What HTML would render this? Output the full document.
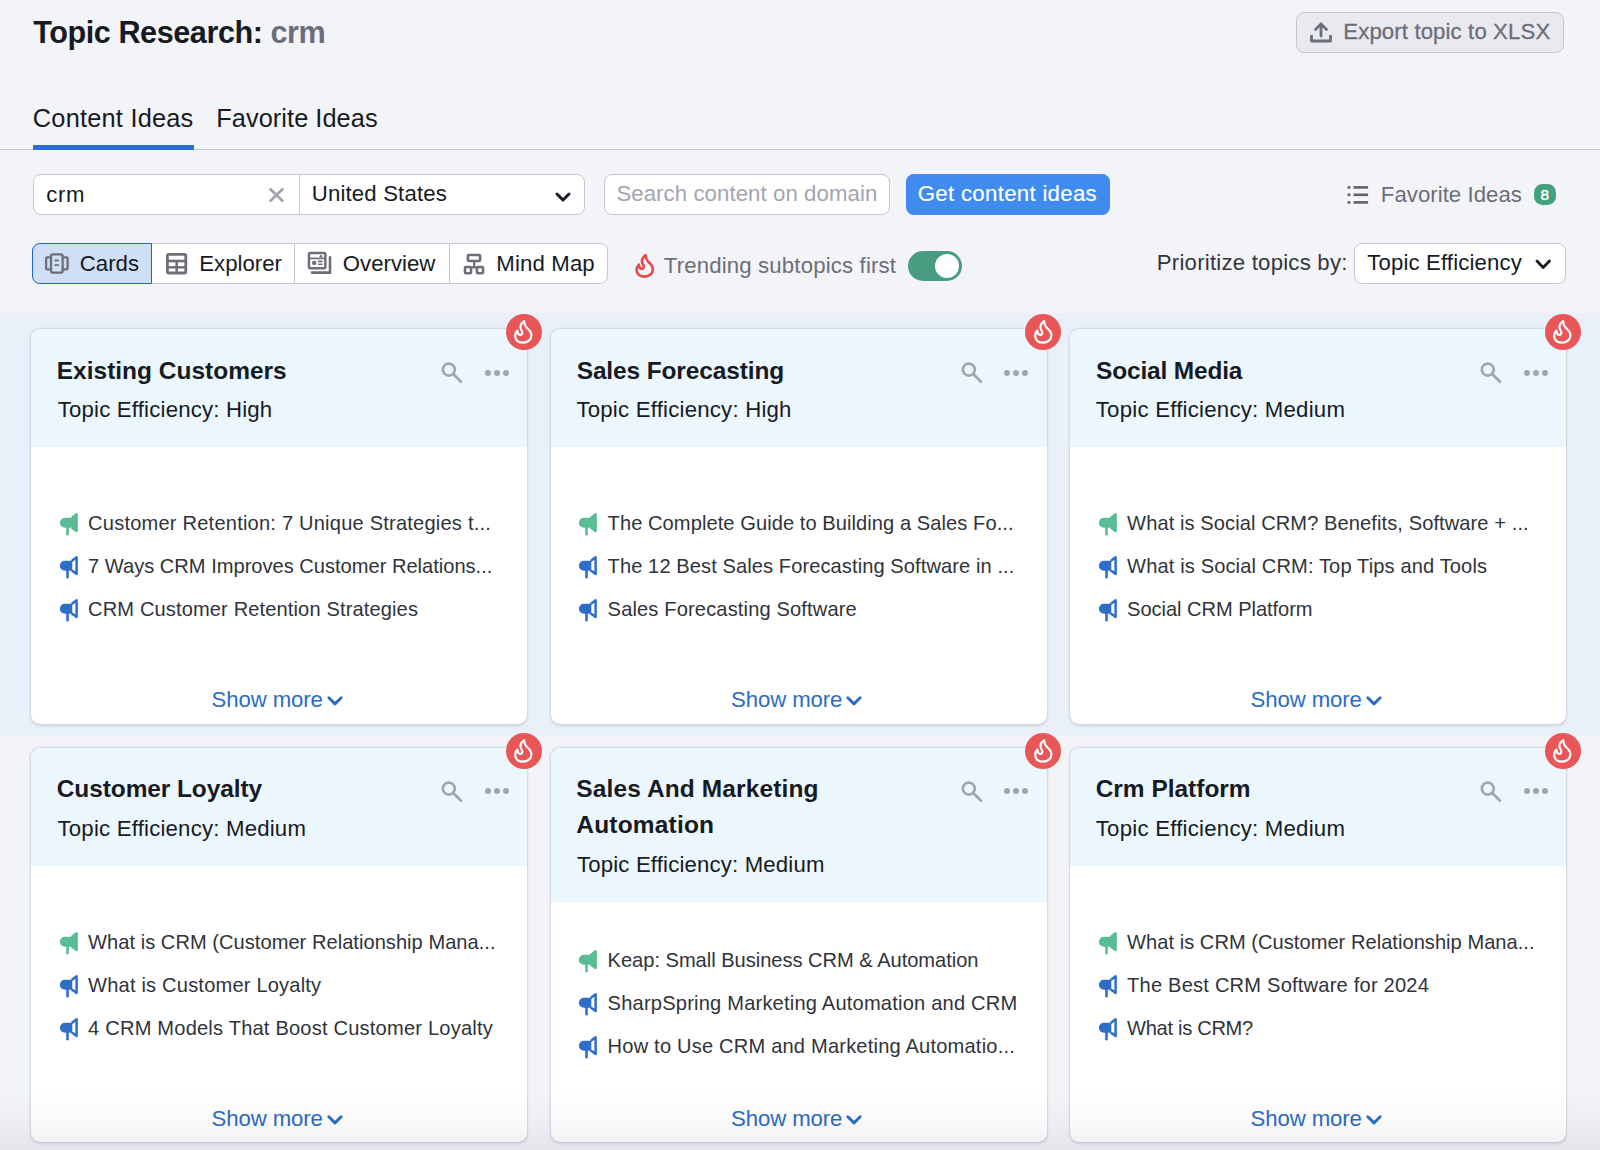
<!DOCTYPE html>
<html><head><meta charset="utf-8">
<style>
*{box-sizing:border-box;margin:0;padding:0}
html,body{width:1600px;height:1150px;overflow:hidden}
body{background:#f3f4f8;font-family:"Liberation Sans", sans-serif;color:#171a22;position:relative}
.a{position:absolute;white-space:nowrap}
.box{border:1.3px solid #c5c7ce;background:#fff;border-radius:8px}
.card{background:#fff;border-radius:9px;overflow:hidden;box-shadow:0 0 0 0.5px rgba(200,206,220,.5),0 0 2px 0.8px rgba(200,206,222,.55),0 1.5px 3px rgba(60,70,90,.12)}
svg.a{overflow:visible}
</style></head><body>
<div class="a" style="left:33.30px;top:17.10px;font-size:30.6px;line-height:30.6px;color:#171a22;font-weight:bold;letter-spacing:-0.439px;">Topic Research: <span style="color:#6b6e7a">crm</span></div>
<div class="a" style="left:1295.5px;top:11.5px;width:268px;height:41px;border:1.3px solid #c5c7ce;border-radius:8px;background:#e9eaef"></div>
<svg class="a" style="left:1309px;top:21px" width="24" height="23" viewBox="0 0 24 23"><path d="M12 3 V15 M6.5 8.5 L12 3 L17.5 8.5" stroke="#6c6e79" stroke-width="2.8" fill="none" stroke-linecap="round" stroke-linejoin="round"/><path d="M2.5 14 V20 H21.5 V14" stroke="#6c6e79" stroke-width="2.8" fill="none" stroke-linejoin="round"/></svg>
<div class="a" style="left:1343.30px;top:20.61px;font-size:22.2px;line-height:22.2px;color:#6c6e79;font-weight:normal;letter-spacing:0.114px;-webkit-text-stroke:0.3px #6c6e79">Export topic to XLSX</div>
<div class="a" style="left:32.80px;top:106.02px;font-size:25.37px;line-height:25.37px;color:#171a22;font-weight:normal;letter-spacing:0.215px;">Content Ideas</div>
<div class="a" style="left:216.30px;top:106.02px;font-size:25.37px;line-height:25.37px;color:#171a22;font-weight:normal;letter-spacing:0.047px;">Favorite Ideas</div>
<div class="a" style="left:0;top:148.5px;width:1600px;height:1.5px;background:#c4c6cd"></div>
<div class="a" style="left:33px;top:145.3px;width:160.5px;height:4.5px;background:#2a6fcf"></div>
<div class="a box" style="left:33.4px;top:174.2px;width:552px;height:41.3px"></div>
<div class="a" style="left:299px;top:175px;width:1.3px;height:40px;background:#c7c9d1"></div>
<div class="a" style="left:46.20px;top:183.51px;font-size:22.2px;line-height:22.2px;color:#171a22;font-weight:normal;letter-spacing:0.700px;">crm</div>
<svg class="a" style="left:260px;top:180px" width="30" height="30" viewBox="0 0 30 30"><path d="M10.5 9.2 L22.4 20.8 M22.4 9.2 L10.5 20.8" stroke="#a0a3ad" stroke-width="2.7" stroke-linecap="round"/></svg>
<div class="a" style="left:311.80px;top:183.41px;font-size:22.2px;line-height:22.2px;color:#171a22;font-weight:normal;letter-spacing:0.152px;">United States</div>
<svg class="a" style="left:555.2px;top:191.6px" width="16" height="11" viewBox="0 0 16 11"><path d="M2 2 L8 8 L14 2" stroke="#171a22" stroke-width="3" fill="none" stroke-linecap="round" stroke-linejoin="round"/></svg>
<div class="a box" style="left:604px;top:174.2px;width:286px;height:41.3px"></div>
<div class="a" style="left:616.40px;top:183.41px;font-size:22.2px;line-height:22.2px;color:#a3a5ae;font-weight:normal;letter-spacing:0.082px;">Search content on domain</div>
<div class="a" style="left:905.7px;top:174.2px;width:204px;height:41.3px;background:#3f8bef;border-radius:8px"></div>
<div class="a" style="left:917.80px;top:183.41px;font-size:22.2px;line-height:22.2px;color:#fff;font-weight:normal;letter-spacing:0.309px;-webkit-text-stroke:0.15px #fff">Get content ideas</div>
<svg class="a" style="left:1347px;top:185px" width="23" height="20" viewBox="0 0 23 20"><g fill="#5f616c"><rect x="0.6" y="1.1" width="2.8" height="2.6"/><rect x="0.6" y="8.5" width="2.8" height="2.6"/><rect x="0.6" y="16.1" width="2.8" height="2.6"/><rect x="6.6" y="1.1" width="14.5" height="2.6"/><rect x="6.6" y="8.5" width="14.5" height="2.6"/><rect x="6.6" y="16.1" width="14.5" height="2.6"/></g></svg>
<div class="a" style="left:1380.80px;top:183.51px;font-size:22.2px;line-height:22.2px;color:#6c6e79;font-weight:normal;letter-spacing:0.037px;">Favorite Ideas</div>
<div class="a" style="left:1534px;top:184.3px;width:21.7px;height:20.7px;background:#45a07d;border-radius:8.5px"></div>
<div class="a" style="left:1540.60px;top:187.18px;font-size:15.5px;line-height:15.5px;color:#fff;font-weight:normal;letter-spacing:0.000px;-webkit-text-stroke:0.4px #fff">8</div>
<div class="a" style="left:31.7px;top:243px;width:576.5px;height:41px;border:1.3px solid #c5c7ce;border-radius:8px;background:#fff"></div>
<div class="a" style="left:31.7px;top:243px;width:120.5px;height:41px;border:1.5px solid #1f63cc;border-radius:8px 0 0 8px;background:#cfe0f6"></div>
<div class="a" style="left:294px;top:244px;width:1.3px;height:39px;background:#c7c9d1"></div>
<div class="a" style="left:449px;top:244px;width:1.3px;height:39px;background:#c7c9d1"></div>
<svg class="a" style="left:40px;top:248px" width="30" height="30" viewBox="0 0 30 30"><rect x="11" y="6.3" width="11.6" height="18.3" rx="1.6" fill="none" stroke="#6c6e79" stroke-width="2.3"/><path d="M11 9.4 H7.2 Q6.1 9.4 6.1 10.5 V20.2 Q6.1 21.3 7.2 21.3 H11 M22.6 9.4 H26.5 Q27.6 9.4 27.6 10.5 V20.2 Q27.6 21.3 26.5 21.3 H22.6" fill="none" stroke="#6c6e79" stroke-width="2.3"/><path d="M15.3 12.4 H18.3 M15.3 17.1 H18.3" stroke="#6c6e79" stroke-width="1.9" stroke-linecap="round"/></svg>
<div class="a" style="left:79.80px;top:252.61px;font-size:22.2px;line-height:22.2px;color:#171a22;font-weight:normal;letter-spacing:0.000px;">Cards</div>
<svg class="a" style="left:165.5px;top:252.5px" width="22" height="22" viewBox="0 0 22 22"><rect x="1.4" y="1.4" width="18.4" height="18.6" rx="1.5" fill="none" stroke="#6c6e79" stroke-width="2.8"/><rect x="1" y="6.7" width="19" height="2.6" fill="#6c6e79"/><rect x="1" y="13.1" width="19" height="2.4" fill="#6c6e79"/><rect x="9.4" y="8" width="2.5" height="12" fill="#6c6e79"/></svg>
<div class="a" style="left:199.30px;top:252.61px;font-size:22.2px;line-height:22.2px;color:#171a22;font-weight:normal;letter-spacing:0.002px;">Explorer</div>
<svg class="a" style="left:306.5px;top:251px" width="26" height="24" viewBox="0 0 26 24"><rect x="1.95" y="2.05" width="16.4" height="15.1" rx="1.3" fill="none" stroke="#6c6e79" stroke-width="2.5"/><path d="M1.5 7.4 H18.5" stroke="#6c6e79" stroke-width="1.7"/><circle cx="14" cy="5.2" r="1.3" fill="#6c6e79"/><circle cx="7.2" cy="11.9" r="2.2" fill="#6c6e79"/><path d="M11.6 10.4 H14.9 M11.6 13.3 H14.9" stroke="#6c6e79" stroke-width="1.6" stroke-linecap="round"/><path d="M23 6.4 V21.6 H5" fill="none" stroke="#6c6e79" stroke-width="2.6" stroke-linecap="round"/></svg>
<div class="a" style="left:342.80px;top:252.61px;font-size:22.2px;line-height:22.2px;color:#171a22;font-weight:normal;letter-spacing:0.002px;">Overview</div>
<svg class="a" style="left:462.5px;top:252.5px" width="22" height="22" viewBox="0 0 22 22"><rect x="4.9" y="2" width="12.2" height="6" rx="1" fill="none" stroke="#6c6e79" stroke-width="2.6"/><rect x="2" y="14" width="6" height="6.2" rx="1" fill="none" stroke="#6c6e79" stroke-width="2.6"/><rect x="14" y="14" width="6" height="6.2" rx="1" fill="none" stroke="#6c6e79" stroke-width="2.6"/><path d="M11.1 8 V14 M7 14.3 H15" fill="none" stroke="#6c6e79" stroke-width="2.2"/></svg>
<div class="a" style="left:496.30px;top:252.61px;font-size:22.2px;line-height:22.2px;color:#171a22;font-weight:normal;letter-spacing:0.142px;">Mind Map</div>
<svg class="a" style="left:635px;top:253.8px" width="20" height="24" viewBox="0 0 19 24"><path d="M10.2 1.2 C6.6 3.6 5.2 7.4 7.6 10.6 C8.8 12.2 8.6 14.6 6.6 14.9 C4.8 15.2 3.6 13.2 3.4 10.6 C1.4 12.6 0.9 15.2 1.3 17.2 C2 20.6 5.2 22.6 9.1 22.6 C13.6 22.6 17.4 19.6 17.4 15.2 C17.4 11.6 14.6 9.6 12.6 7.6 C11.2 6.2 10.4 4.8 10.2 1.2 Z" fill="none" stroke="#e8484a" stroke-width="2.6" stroke-linejoin="round"/></svg>
<div class="a" style="left:663.80px;top:254.81px;font-size:22.2px;line-height:22.2px;color:#6c6e79;font-weight:normal;letter-spacing:0.157px;">Trending subtopics first</div>
<div class="a" style="left:908.3px;top:250.9px;width:53.7px;height:29.8px;border-radius:15px;background:#4a9c80"></div>
<div class="a" style="left:935px;top:253.9px;width:24px;height:24px;border-radius:50%;background:#fff"></div>
<div class="a" style="left:1156.80px;top:251.71px;font-size:22.2px;line-height:22.2px;color:#33363d;font-weight:normal;letter-spacing:0.220px;">Prioritize topics by:</div>
<div class="a box" style="left:1353.5px;top:243.4px;width:212px;height:40.5px"></div>
<div class="a" style="left:1367.30px;top:251.71px;font-size:22.2px;line-height:22.2px;color:#171a22;font-weight:normal;letter-spacing:0.130px;">Topic Efficiency</div>
<svg class="a" style="left:1535px;top:259px" width="17" height="12" viewBox="0 0 17 12"><path d="M2 2 L8.2 8.5 L14.5 2" stroke="#171a22" stroke-width="2.8" fill="none" stroke-linecap="round" stroke-linejoin="round"/></svg>
<div class="a" style="left:0;top:313px;width:1600px;height:423px;background:#e9f0f9"></div>
<div class="a card" style="left:31px;top:329px;width:496px;height:394.6px"><div style="position:absolute;left:0;top:0;width:100%;height:118px;background:#ecf6fd"></div></div>
<div class="a" style="left:56.80px;top:358.78px;font-size:24.48px;line-height:24.48px;color:#171a22;font-weight:bold;letter-spacing:0.003px;">Existing Customers</div>
<div class="a" style="left:57.70px;top:399.01px;font-size:22.2px;line-height:22.2px;color:#171a22;font-weight:normal;letter-spacing:0.192px;">Topic Efficiency: High</div>
<svg class="a" style="left:439px;top:360px" width="26" height="26" viewBox="0 0 26 26"><circle cx="9.8" cy="9.6" r="6" fill="none" stroke="#a3a5ae" stroke-width="2.7"/><path d="M14.2 14 L22 21.8" stroke="#a3a5ae" stroke-width="2.7" stroke-linecap="round"/></svg>
<div class="a" style="left:484.5px;top:369.59999999999997px;width:6.2px;height:6.2px;border-radius:50%;background:#a3a5ae"></div>
<div class="a" style="left:493.7px;top:369.59999999999997px;width:6.2px;height:6.2px;border-radius:50%;background:#a3a5ae"></div>
<div class="a" style="left:502.5px;top:369.59999999999997px;width:6.2px;height:6.2px;border-radius:50%;background:#a3a5ae"></div>
<svg class="a" style="left:59.7px;top:513.1px" width="19" height="23" viewBox="0 0 19 23"><path d="M4.9 4.7 H12.3 V14.8 H4.9 A5.05 5.05 0 0 1 4.9 4.7 Z" fill="#58bd92"/><path d="M11.7 4.9 L16.6 1.3 V17.9 L11.7 14.5" fill="#58bd92" stroke="#58bd92" stroke-width="2.5" stroke-linejoin="round"/><path d="M7.5 13 V21.2" stroke="#58bd92" stroke-width="2.6" stroke-linecap="round"/></svg>
<div class="a" style="left:88.10px;top:513.00px;font-size:20.08px;line-height:20.08px;color:#30333a;font-weight:normal;letter-spacing:0.204px;">Customer Retention: 7 Unique Strategies t...</div>
<svg class="a" style="left:59.7px;top:556.1px" width="19" height="23" viewBox="0 0 19 23"><path d="M4.9 4.7 H12.3 V14.8 H4.9 A5.05 5.05 0 0 1 4.9 4.7 Z" fill="#2e6ec8"/><path d="M11.7 4.9 L16.6 1.3 V17.9 L11.7 14.5" fill="none" stroke="#2e6ec8" stroke-width="2.5" stroke-linejoin="round"/><path d="M7.5 13 V21.2" stroke="#2e6ec8" stroke-width="2.6" stroke-linecap="round"/></svg>
<div class="a" style="left:88.10px;top:556.00px;font-size:20.08px;line-height:20.08px;color:#30333a;font-weight:normal;letter-spacing:-0.001px;">7 Ways CRM Improves Customer Relations...</div>
<svg class="a" style="left:59.7px;top:599.1px" width="19" height="23" viewBox="0 0 19 23"><path d="M4.9 4.7 H12.3 V14.8 H4.9 A5.05 5.05 0 0 1 4.9 4.7 Z" fill="#2e6ec8"/><path d="M11.7 4.9 L16.6 1.3 V17.9 L11.7 14.5" fill="none" stroke="#2e6ec8" stroke-width="2.5" stroke-linejoin="round"/><path d="M7.5 13 V21.2" stroke="#2e6ec8" stroke-width="2.6" stroke-linecap="round"/></svg>
<div class="a" style="left:88.10px;top:599.00px;font-size:20.08px;line-height:20.08px;color:#30333a;font-weight:normal;letter-spacing:0.125px;">CRM Customer Retention Strategies</div>
<div class="a" style="left:211.60px;top:689.41px;font-size:22.2px;line-height:22.2px;color:#2c6cc0;font-weight:normal;letter-spacing:-0.112px;">Show more</div>
<svg class="a" style="left:326.5px;top:696px" width="16" height="11" viewBox="0 0 16 11"><path d="M1.8 1.8 L8 7.9 L14.2 1.8" stroke="#2c6cc0" stroke-width="2.9" fill="none" stroke-linecap="round" stroke-linejoin="round"/></svg>
<div class="a" style="left:505.5px;top:314.3px;width:36px;height:36px;border-radius:50%;background:#e95658"></div>
<svg class="a" style="left:514.1px;top:320.40000000000003px" width="19" height="24" viewBox="0 0 19 24"><path d="M10.2 1.2 C6.6 3.6 5.2 7.4 7.6 10.6 C8.8 12.2 8.6 14.6 6.6 14.9 C4.8 15.2 3.6 13.2 3.4 10.6 C1.4 12.6 0.9 15.2 1.3 17.2 C2 20.6 5.2 22.6 9.1 22.6 C13.6 22.6 17.4 19.6 17.4 15.2 C17.4 11.6 14.6 9.6 12.6 7.6 C11.2 6.2 10.4 4.8 10.2 1.2 Z" fill="none" stroke="#fff" stroke-width="2.2" stroke-linejoin="round"/></svg>
<div class="a card" style="left:550.5px;top:329px;width:496px;height:394.6px"><div style="position:absolute;left:0;top:0;width:100%;height:118px;background:#ecf6fd"></div></div>
<div class="a" style="left:576.70px;top:358.78px;font-size:24.48px;line-height:24.48px;color:#171a22;font-weight:bold;letter-spacing:-0.121px;">Sales Forecasting</div>
<div class="a" style="left:576.40px;top:399.01px;font-size:22.2px;line-height:22.2px;color:#171a22;font-weight:normal;letter-spacing:0.219px;">Topic Efficiency: High</div>
<svg class="a" style="left:958.5px;top:360px" width="26" height="26" viewBox="0 0 26 26"><circle cx="9.8" cy="9.6" r="6" fill="none" stroke="#a3a5ae" stroke-width="2.7"/><path d="M14.2 14 L22 21.8" stroke="#a3a5ae" stroke-width="2.7" stroke-linecap="round"/></svg>
<div class="a" style="left:1004.0px;top:369.59999999999997px;width:6.2px;height:6.2px;border-radius:50%;background:#a3a5ae"></div>
<div class="a" style="left:1013.1999999999999px;top:369.59999999999997px;width:6.2px;height:6.2px;border-radius:50%;background:#a3a5ae"></div>
<div class="a" style="left:1021.9999999999999px;top:369.59999999999997px;width:6.2px;height:6.2px;border-radius:50%;background:#a3a5ae"></div>
<svg class="a" style="left:579.2px;top:513.1px" width="19" height="23" viewBox="0 0 19 23"><path d="M4.9 4.7 H12.3 V14.8 H4.9 A5.05 5.05 0 0 1 4.9 4.7 Z" fill="#58bd92"/><path d="M11.7 4.9 L16.6 1.3 V17.9 L11.7 14.5" fill="#58bd92" stroke="#58bd92" stroke-width="2.5" stroke-linejoin="round"/><path d="M7.5 13 V21.2" stroke="#58bd92" stroke-width="2.6" stroke-linecap="round"/></svg>
<div class="a" style="left:607.60px;top:513.00px;font-size:20.08px;line-height:20.08px;color:#30333a;font-weight:normal;letter-spacing:0.071px;">The Complete Guide to Building a Sales Fo...</div>
<svg class="a" style="left:579.2px;top:556.1px" width="19" height="23" viewBox="0 0 19 23"><path d="M4.9 4.7 H12.3 V14.8 H4.9 A5.05 5.05 0 0 1 4.9 4.7 Z" fill="#2e6ec8"/><path d="M11.7 4.9 L16.6 1.3 V17.9 L11.7 14.5" fill="none" stroke="#2e6ec8" stroke-width="2.5" stroke-linejoin="round"/><path d="M7.5 13 V21.2" stroke="#2e6ec8" stroke-width="2.6" stroke-linecap="round"/></svg>
<div class="a" style="left:607.60px;top:556.00px;font-size:20.08px;line-height:20.08px;color:#30333a;font-weight:normal;letter-spacing:0.088px;">The 12 Best Sales Forecasting Software in ...</div>
<svg class="a" style="left:579.2px;top:599.1px" width="19" height="23" viewBox="0 0 19 23"><path d="M4.9 4.7 H12.3 V14.8 H4.9 A5.05 5.05 0 0 1 4.9 4.7 Z" fill="#2e6ec8"/><path d="M11.7 4.9 L16.6 1.3 V17.9 L11.7 14.5" fill="none" stroke="#2e6ec8" stroke-width="2.5" stroke-linejoin="round"/><path d="M7.5 13 V21.2" stroke="#2e6ec8" stroke-width="2.6" stroke-linecap="round"/></svg>
<div class="a" style="left:607.60px;top:599.00px;font-size:20.08px;line-height:20.08px;color:#30333a;font-weight:normal;letter-spacing:0.146px;">Sales Forecasting Software</div>
<div class="a" style="left:731.10px;top:689.41px;font-size:22.2px;line-height:22.2px;color:#2c6cc0;font-weight:normal;letter-spacing:-0.112px;">Show more</div>
<svg class="a" style="left:846.0px;top:696px" width="16" height="11" viewBox="0 0 16 11"><path d="M1.8 1.8 L8 7.9 L14.2 1.8" stroke="#2c6cc0" stroke-width="2.9" fill="none" stroke-linecap="round" stroke-linejoin="round"/></svg>
<div class="a" style="left:1025.0px;top:314.3px;width:36px;height:36px;border-radius:50%;background:#e95658"></div>
<svg class="a" style="left:1033.6px;top:320.40000000000003px" width="19" height="24" viewBox="0 0 19 24"><path d="M10.2 1.2 C6.6 3.6 5.2 7.4 7.6 10.6 C8.8 12.2 8.6 14.6 6.6 14.9 C4.8 15.2 3.6 13.2 3.4 10.6 C1.4 12.6 0.9 15.2 1.3 17.2 C2 20.6 5.2 22.6 9.1 22.6 C13.6 22.6 17.4 19.6 17.4 15.2 C17.4 11.6 14.6 9.6 12.6 7.6 C11.2 6.2 10.4 4.8 10.2 1.2 Z" fill="none" stroke="#fff" stroke-width="2.2" stroke-linejoin="round"/></svg>
<div class="a card" style="left:1070px;top:329px;width:496px;height:394.6px"><div style="position:absolute;left:0;top:0;width:100%;height:118px;background:#ecf6fd"></div></div>
<div class="a" style="left:1096.10px;top:358.78px;font-size:24.48px;line-height:24.48px;color:#171a22;font-weight:bold;letter-spacing:-0.170px;">Social Media</div>
<div class="a" style="left:1095.80px;top:399.01px;font-size:22.2px;line-height:22.2px;color:#171a22;font-weight:normal;letter-spacing:0.233px;">Topic Efficiency: Medium</div>
<svg class="a" style="left:1478px;top:360px" width="26" height="26" viewBox="0 0 26 26"><circle cx="9.8" cy="9.6" r="6" fill="none" stroke="#a3a5ae" stroke-width="2.7"/><path d="M14.2 14 L22 21.8" stroke="#a3a5ae" stroke-width="2.7" stroke-linecap="round"/></svg>
<div class="a" style="left:1523.5px;top:369.59999999999997px;width:6.2px;height:6.2px;border-radius:50%;background:#a3a5ae"></div>
<div class="a" style="left:1532.7px;top:369.59999999999997px;width:6.2px;height:6.2px;border-radius:50%;background:#a3a5ae"></div>
<div class="a" style="left:1541.5px;top:369.59999999999997px;width:6.2px;height:6.2px;border-radius:50%;background:#a3a5ae"></div>
<svg class="a" style="left:1098.7px;top:513.1px" width="19" height="23" viewBox="0 0 19 23"><path d="M4.9 4.7 H12.3 V14.8 H4.9 A5.05 5.05 0 0 1 4.9 4.7 Z" fill="#58bd92"/><path d="M11.7 4.9 L16.6 1.3 V17.9 L11.7 14.5" fill="#58bd92" stroke="#58bd92" stroke-width="2.5" stroke-linejoin="round"/><path d="M7.5 13 V21.2" stroke="#58bd92" stroke-width="2.6" stroke-linecap="round"/></svg>
<div class="a" style="left:1127.10px;top:513.00px;font-size:20.08px;line-height:20.08px;color:#30333a;font-weight:normal;letter-spacing:0.088px;">What is Social CRM? Benefits, Software + ...</div>
<svg class="a" style="left:1098.7px;top:556.1px" width="19" height="23" viewBox="0 0 19 23"><path d="M4.9 4.7 H12.3 V14.8 H4.9 A5.05 5.05 0 0 1 4.9 4.7 Z" fill="#2e6ec8"/><path d="M11.7 4.9 L16.6 1.3 V17.9 L11.7 14.5" fill="none" stroke="#2e6ec8" stroke-width="2.5" stroke-linejoin="round"/><path d="M7.5 13 V21.2" stroke="#2e6ec8" stroke-width="2.6" stroke-linecap="round"/></svg>
<div class="a" style="left:1127.10px;top:556.00px;font-size:20.08px;line-height:20.08px;color:#30333a;font-weight:normal;letter-spacing:0.127px;">What is Social CRM: Top Tips and Tools</div>
<svg class="a" style="left:1098.7px;top:599.1px" width="19" height="23" viewBox="0 0 19 23"><path d="M4.9 4.7 H12.3 V14.8 H4.9 A5.05 5.05 0 0 1 4.9 4.7 Z" fill="#2e6ec8"/><path d="M11.7 4.9 L16.6 1.3 V17.9 L11.7 14.5" fill="none" stroke="#2e6ec8" stroke-width="2.5" stroke-linejoin="round"/><path d="M7.5 13 V21.2" stroke="#2e6ec8" stroke-width="2.6" stroke-linecap="round"/></svg>
<div class="a" style="left:1127.10px;top:599.00px;font-size:20.08px;line-height:20.08px;color:#30333a;font-weight:normal;letter-spacing:-0.047px;">Social CRM Platform</div>
<div class="a" style="left:1250.60px;top:689.41px;font-size:22.2px;line-height:22.2px;color:#2c6cc0;font-weight:normal;letter-spacing:-0.112px;">Show more</div>
<svg class="a" style="left:1365.5px;top:696px" width="16" height="11" viewBox="0 0 16 11"><path d="M1.8 1.8 L8 7.9 L14.2 1.8" stroke="#2c6cc0" stroke-width="2.9" fill="none" stroke-linecap="round" stroke-linejoin="round"/></svg>
<div class="a" style="left:1544.5px;top:314.3px;width:36px;height:36px;border-radius:50%;background:#e95658"></div>
<svg class="a" style="left:1553.1px;top:320.40000000000003px" width="19" height="24" viewBox="0 0 19 24"><path d="M10.2 1.2 C6.6 3.6 5.2 7.4 7.6 10.6 C8.8 12.2 8.6 14.6 6.6 14.9 C4.8 15.2 3.6 13.2 3.4 10.6 C1.4 12.6 0.9 15.2 1.3 17.2 C2 20.6 5.2 22.6 9.1 22.6 C13.6 22.6 17.4 19.6 17.4 15.2 C17.4 11.6 14.6 9.6 12.6 7.6 C11.2 6.2 10.4 4.8 10.2 1.2 Z" fill="none" stroke="#fff" stroke-width="2.2" stroke-linejoin="round"/></svg>
<div class="a card" style="left:31px;top:747.7px;width:496px;height:394.6px"><div style="position:absolute;left:0;top:0;width:100%;height:118px;background:#ecf6fd"></div></div>
<div class="a" style="left:56.80px;top:777.48px;font-size:24.48px;line-height:24.48px;color:#171a22;font-weight:bold;letter-spacing:-0.093px;">Customer Loyalty</div>
<div class="a" style="left:57.50px;top:817.71px;font-size:22.2px;line-height:22.2px;color:#171a22;font-weight:normal;letter-spacing:0.202px;">Topic Efficiency: Medium</div>
<svg class="a" style="left:439px;top:778.7px" width="26" height="26" viewBox="0 0 26 26"><circle cx="9.8" cy="9.6" r="6" fill="none" stroke="#a3a5ae" stroke-width="2.7"/><path d="M14.2 14 L22 21.8" stroke="#a3a5ae" stroke-width="2.7" stroke-linecap="round"/></svg>
<div class="a" style="left:484.5px;top:788.3000000000001px;width:6.2px;height:6.2px;border-radius:50%;background:#a3a5ae"></div>
<div class="a" style="left:493.7px;top:788.3000000000001px;width:6.2px;height:6.2px;border-radius:50%;background:#a3a5ae"></div>
<div class="a" style="left:502.5px;top:788.3000000000001px;width:6.2px;height:6.2px;border-radius:50%;background:#a3a5ae"></div>
<svg class="a" style="left:59.7px;top:931.8000000000001px" width="19" height="23" viewBox="0 0 19 23"><path d="M4.9 4.7 H12.3 V14.8 H4.9 A5.05 5.05 0 0 1 4.9 4.7 Z" fill="#58bd92"/><path d="M11.7 4.9 L16.6 1.3 V17.9 L11.7 14.5" fill="#58bd92" stroke="#58bd92" stroke-width="2.5" stroke-linejoin="round"/><path d="M7.5 13 V21.2" stroke="#58bd92" stroke-width="2.6" stroke-linecap="round"/></svg>
<div class="a" style="left:88.10px;top:931.70px;font-size:20.08px;line-height:20.08px;color:#30333a;font-weight:normal;letter-spacing:0.032px;">What is CRM (Customer Relationship Mana...</div>
<svg class="a" style="left:59.7px;top:974.8000000000001px" width="19" height="23" viewBox="0 0 19 23"><path d="M4.9 4.7 H12.3 V14.8 H4.9 A5.05 5.05 0 0 1 4.9 4.7 Z" fill="#2e6ec8"/><path d="M11.7 4.9 L16.6 1.3 V17.9 L11.7 14.5" fill="none" stroke="#2e6ec8" stroke-width="2.5" stroke-linejoin="round"/><path d="M7.5 13 V21.2" stroke="#2e6ec8" stroke-width="2.6" stroke-linecap="round"/></svg>
<div class="a" style="left:88.10px;top:974.70px;font-size:20.08px;line-height:20.08px;color:#30333a;font-weight:normal;letter-spacing:0.187px;">What is Customer Loyalty</div>
<svg class="a" style="left:59.7px;top:1017.8000000000001px" width="19" height="23" viewBox="0 0 19 23"><path d="M4.9 4.7 H12.3 V14.8 H4.9 A5.05 5.05 0 0 1 4.9 4.7 Z" fill="#2e6ec8"/><path d="M11.7 4.9 L16.6 1.3 V17.9 L11.7 14.5" fill="none" stroke="#2e6ec8" stroke-width="2.5" stroke-linejoin="round"/><path d="M7.5 13 V21.2" stroke="#2e6ec8" stroke-width="2.6" stroke-linecap="round"/></svg>
<div class="a" style="left:88.10px;top:1017.70px;font-size:20.08px;line-height:20.08px;color:#30333a;font-weight:normal;letter-spacing:0.199px;">4 CRM Models That Boost Customer Loyalty</div>
<div class="a" style="left:211.60px;top:1108.11px;font-size:22.2px;line-height:22.2px;color:#2c6cc0;font-weight:normal;letter-spacing:-0.112px;">Show more</div>
<svg class="a" style="left:326.5px;top:1114.7px" width="16" height="11" viewBox="0 0 16 11"><path d="M1.8 1.8 L8 7.9 L14.2 1.8" stroke="#2c6cc0" stroke-width="2.9" fill="none" stroke-linecap="round" stroke-linejoin="round"/></svg>
<div class="a" style="left:505.5px;top:733.0px;width:36px;height:36px;border-radius:50%;background:#e95658"></div>
<svg class="a" style="left:514.1px;top:739.1px" width="19" height="24" viewBox="0 0 19 24"><path d="M10.2 1.2 C6.6 3.6 5.2 7.4 7.6 10.6 C8.8 12.2 8.6 14.6 6.6 14.9 C4.8 15.2 3.6 13.2 3.4 10.6 C1.4 12.6 0.9 15.2 1.3 17.2 C2 20.6 5.2 22.6 9.1 22.6 C13.6 22.6 17.4 19.6 17.4 15.2 C17.4 11.6 14.6 9.6 12.6 7.6 C11.2 6.2 10.4 4.8 10.2 1.2 Z" fill="none" stroke="#fff" stroke-width="2.2" stroke-linejoin="round"/></svg>
<div class="a card" style="left:550.5px;top:747.7px;width:496px;height:394.6px"><div style="position:absolute;left:0;top:0;width:100%;height:154px;background:#ecf6fd"></div></div>
<div class="a" style="left:576.30px;top:777.48px;font-size:24.48px;line-height:24.48px;color:#171a22;font-weight:bold;letter-spacing:0.133px;">Sales And Marketing</div>
<div class="a" style="left:576.30px;top:813.48px;font-size:24.48px;line-height:24.48px;color:#171a22;font-weight:bold;letter-spacing:0.199px;">Automation</div>
<div class="a" style="left:577.00px;top:853.71px;font-size:22.2px;line-height:22.2px;color:#171a22;font-weight:normal;letter-spacing:0.157px;">Topic Efficiency: Medium</div>
<svg class="a" style="left:958.5px;top:778.7px" width="26" height="26" viewBox="0 0 26 26"><circle cx="9.8" cy="9.6" r="6" fill="none" stroke="#a3a5ae" stroke-width="2.7"/><path d="M14.2 14 L22 21.8" stroke="#a3a5ae" stroke-width="2.7" stroke-linecap="round"/></svg>
<div class="a" style="left:1004.0px;top:788.3000000000001px;width:6.2px;height:6.2px;border-radius:50%;background:#a3a5ae"></div>
<div class="a" style="left:1013.1999999999999px;top:788.3000000000001px;width:6.2px;height:6.2px;border-radius:50%;background:#a3a5ae"></div>
<div class="a" style="left:1021.9999999999999px;top:788.3000000000001px;width:6.2px;height:6.2px;border-radius:50%;background:#a3a5ae"></div>
<svg class="a" style="left:579.2px;top:949.8000000000001px" width="19" height="23" viewBox="0 0 19 23"><path d="M4.9 4.7 H12.3 V14.8 H4.9 A5.05 5.05 0 0 1 4.9 4.7 Z" fill="#58bd92"/><path d="M11.7 4.9 L16.6 1.3 V17.9 L11.7 14.5" fill="#58bd92" stroke="#58bd92" stroke-width="2.5" stroke-linejoin="round"/><path d="M7.5 13 V21.2" stroke="#58bd92" stroke-width="2.6" stroke-linecap="round"/></svg>
<div class="a" style="left:607.60px;top:949.70px;font-size:20.08px;line-height:20.08px;color:#30333a;font-weight:normal;letter-spacing:-0.019px;">Keap: Small Business CRM &amp; Automation</div>
<svg class="a" style="left:579.2px;top:992.8000000000001px" width="19" height="23" viewBox="0 0 19 23"><path d="M4.9 4.7 H12.3 V14.8 H4.9 A5.05 5.05 0 0 1 4.9 4.7 Z" fill="#2e6ec8"/><path d="M11.7 4.9 L16.6 1.3 V17.9 L11.7 14.5" fill="none" stroke="#2e6ec8" stroke-width="2.5" stroke-linejoin="round"/><path d="M7.5 13 V21.2" stroke="#2e6ec8" stroke-width="2.6" stroke-linecap="round"/></svg>
<div class="a" style="left:607.60px;top:992.70px;font-size:20.08px;line-height:20.08px;color:#30333a;font-weight:normal;letter-spacing:0.201px;">SharpSpring Marketing Automation and CRM</div>
<svg class="a" style="left:579.2px;top:1035.8px" width="19" height="23" viewBox="0 0 19 23"><path d="M4.9 4.7 H12.3 V14.8 H4.9 A5.05 5.05 0 0 1 4.9 4.7 Z" fill="#2e6ec8"/><path d="M11.7 4.9 L16.6 1.3 V17.9 L11.7 14.5" fill="none" stroke="#2e6ec8" stroke-width="2.5" stroke-linejoin="round"/><path d="M7.5 13 V21.2" stroke="#2e6ec8" stroke-width="2.6" stroke-linecap="round"/></svg>
<div class="a" style="left:607.60px;top:1035.70px;font-size:20.08px;line-height:20.08px;color:#30333a;font-weight:normal;letter-spacing:0.192px;">How to Use CRM and Marketing Automatio...</div>
<div class="a" style="left:731.10px;top:1108.11px;font-size:22.2px;line-height:22.2px;color:#2c6cc0;font-weight:normal;letter-spacing:-0.112px;">Show more</div>
<svg class="a" style="left:846.0px;top:1114.7px" width="16" height="11" viewBox="0 0 16 11"><path d="M1.8 1.8 L8 7.9 L14.2 1.8" stroke="#2c6cc0" stroke-width="2.9" fill="none" stroke-linecap="round" stroke-linejoin="round"/></svg>
<div class="a" style="left:1025.0px;top:733.0px;width:36px;height:36px;border-radius:50%;background:#e95658"></div>
<svg class="a" style="left:1033.6px;top:739.1px" width="19" height="24" viewBox="0 0 19 24"><path d="M10.2 1.2 C6.6 3.6 5.2 7.4 7.6 10.6 C8.8 12.2 8.6 14.6 6.6 14.9 C4.8 15.2 3.6 13.2 3.4 10.6 C1.4 12.6 0.9 15.2 1.3 17.2 C2 20.6 5.2 22.6 9.1 22.6 C13.6 22.6 17.4 19.6 17.4 15.2 C17.4 11.6 14.6 9.6 12.6 7.6 C11.2 6.2 10.4 4.8 10.2 1.2 Z" fill="none" stroke="#fff" stroke-width="2.2" stroke-linejoin="round"/></svg>
<div class="a card" style="left:1070px;top:747.7px;width:496px;height:394.6px"><div style="position:absolute;left:0;top:0;width:100%;height:118px;background:#ecf6fd"></div></div>
<div class="a" style="left:1095.70px;top:777.48px;font-size:24.48px;line-height:24.48px;color:#171a22;font-weight:bold;letter-spacing:-0.006px;">Crm Platform</div>
<div class="a" style="left:1095.80px;top:817.71px;font-size:22.2px;line-height:22.2px;color:#171a22;font-weight:normal;letter-spacing:0.233px;">Topic Efficiency: Medium</div>
<svg class="a" style="left:1478px;top:778.7px" width="26" height="26" viewBox="0 0 26 26"><circle cx="9.8" cy="9.6" r="6" fill="none" stroke="#a3a5ae" stroke-width="2.7"/><path d="M14.2 14 L22 21.8" stroke="#a3a5ae" stroke-width="2.7" stroke-linecap="round"/></svg>
<div class="a" style="left:1523.5px;top:788.3000000000001px;width:6.2px;height:6.2px;border-radius:50%;background:#a3a5ae"></div>
<div class="a" style="left:1532.7px;top:788.3000000000001px;width:6.2px;height:6.2px;border-radius:50%;background:#a3a5ae"></div>
<div class="a" style="left:1541.5px;top:788.3000000000001px;width:6.2px;height:6.2px;border-radius:50%;background:#a3a5ae"></div>
<svg class="a" style="left:1098.7px;top:931.8000000000001px" width="19" height="23" viewBox="0 0 19 23"><path d="M4.9 4.7 H12.3 V14.8 H4.9 A5.05 5.05 0 0 1 4.9 4.7 Z" fill="#58bd92"/><path d="M11.7 4.9 L16.6 1.3 V17.9 L11.7 14.5" fill="#58bd92" stroke="#58bd92" stroke-width="2.5" stroke-linejoin="round"/><path d="M7.5 13 V21.2" stroke="#58bd92" stroke-width="2.6" stroke-linecap="round"/></svg>
<div class="a" style="left:1127.10px;top:931.70px;font-size:20.08px;line-height:20.08px;color:#30333a;font-weight:normal;letter-spacing:0.032px;">What is CRM (Customer Relationship Mana...</div>
<svg class="a" style="left:1098.7px;top:974.8000000000001px" width="19" height="23" viewBox="0 0 19 23"><path d="M4.9 4.7 H12.3 V14.8 H4.9 A5.05 5.05 0 0 1 4.9 4.7 Z" fill="#2e6ec8"/><path d="M11.7 4.9 L16.6 1.3 V17.9 L11.7 14.5" fill="none" stroke="#2e6ec8" stroke-width="2.5" stroke-linejoin="round"/><path d="M7.5 13 V21.2" stroke="#2e6ec8" stroke-width="2.6" stroke-linecap="round"/></svg>
<div class="a" style="left:1127.10px;top:974.70px;font-size:20.08px;line-height:20.08px;color:#30333a;font-weight:normal;letter-spacing:0.209px;">The Best CRM Software for 2024</div>
<svg class="a" style="left:1098.7px;top:1017.8000000000001px" width="19" height="23" viewBox="0 0 19 23"><path d="M4.9 4.7 H12.3 V14.8 H4.9 A5.05 5.05 0 0 1 4.9 4.7 Z" fill="#2e6ec8"/><path d="M11.7 4.9 L16.6 1.3 V17.9 L11.7 14.5" fill="none" stroke="#2e6ec8" stroke-width="2.5" stroke-linejoin="round"/><path d="M7.5 13 V21.2" stroke="#2e6ec8" stroke-width="2.6" stroke-linecap="round"/></svg>
<div class="a" style="left:1127.10px;top:1017.70px;font-size:20.08px;line-height:20.08px;color:#30333a;font-weight:normal;letter-spacing:-0.299px;">What is CRM?</div>
<div class="a" style="left:1250.60px;top:1108.11px;font-size:22.2px;line-height:22.2px;color:#2c6cc0;font-weight:normal;letter-spacing:-0.112px;">Show more</div>
<svg class="a" style="left:1365.5px;top:1114.7px" width="16" height="11" viewBox="0 0 16 11"><path d="M1.8 1.8 L8 7.9 L14.2 1.8" stroke="#2c6cc0" stroke-width="2.9" fill="none" stroke-linecap="round" stroke-linejoin="round"/></svg>
<div class="a" style="left:1544.5px;top:733.0px;width:36px;height:36px;border-radius:50%;background:#e95658"></div>
<svg class="a" style="left:1553.1px;top:739.1px" width="19" height="24" viewBox="0 0 19 24"><path d="M10.2 1.2 C6.6 3.6 5.2 7.4 7.6 10.6 C8.8 12.2 8.6 14.6 6.6 14.9 C4.8 15.2 3.6 13.2 3.4 10.6 C1.4 12.6 0.9 15.2 1.3 17.2 C2 20.6 5.2 22.6 9.1 22.6 C13.6 22.6 17.4 19.6 17.4 15.2 C17.4 11.6 14.6 9.6 12.6 7.6 C11.2 6.2 10.4 4.8 10.2 1.2 Z" fill="none" stroke="#fff" stroke-width="2.2" stroke-linejoin="round"/></svg>
<div class="a" style="left:0;top:1090px;width:1600px;height:60px;background:linear-gradient(to bottom,rgba(20,20,40,0) 0%,rgba(20,20,40,.025) 50%,rgba(20,20,40,.065) 100%)"></div>
</body></html>
